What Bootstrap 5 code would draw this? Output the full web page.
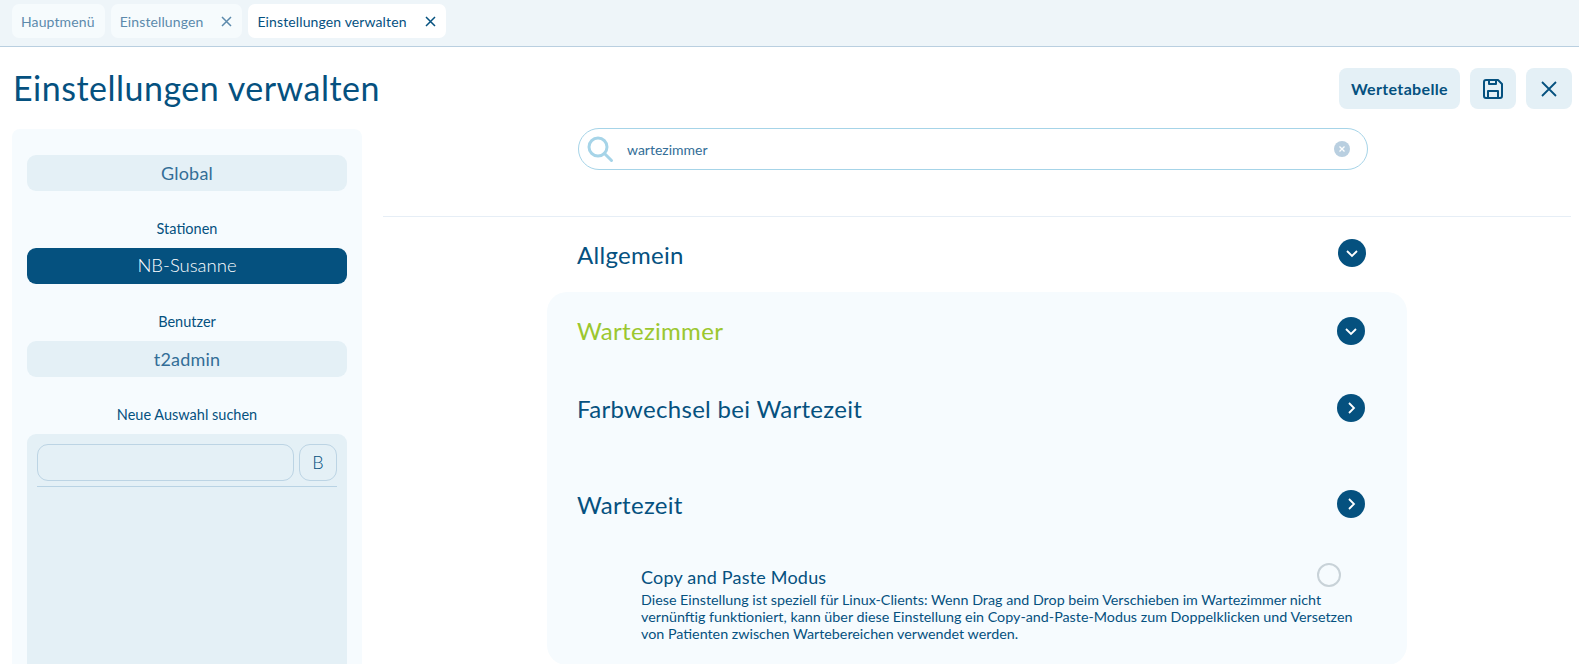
<!DOCTYPE html>
<html lang="de">
<head>
    <meta charset="UTF-8">
    <title>Einstellungen verwalten</title>
    <link href="https://cdn.jsdelivr.net/npm/bootstrap@5.3.0/dist/css/bootstrap.min.css" rel="stylesheet">
    <style>
        html, body { height: 664px; overflow: hidden; }
        body { font-family: Lato, "Open Sans", sans-serif; color: #05517f; background: #fff; }
        .tab-strip { height: 47px; background: #eef5f9; border-bottom: 1px solid #b9cfe0; padding: 4px 12px 0; gap: 6px; }
        .tab-item { height: 34px; border-radius: 7px; background: #f6fbfd; color: #5c8aac; font-size: 14px; letter-spacing: .12px; padding: 0 10px 0 9px; }
        .tab-item.is-active { background: #fff; color: #05517f; }
        .tab-x { width: 11px; height: 11px; margin-left: 18px; }
        .page-head { height: 82px; padding: 21px 7px 0 13px; }
        .page-title { font-size: 34px; font-weight: 400; letter-spacing: .5px; margin: 0; line-height: 40px; }
        .head-tools { gap: 10px; }
        .tool-btn { height: 41px; background: #e4f0f6; color: #05517f; border: 0; border-radius: 8px; font-weight: 700; font-size: 16px; letter-spacing: .35px; min-width: 46px; padding: 0 12px; }
        .side-panel { width: 350px; margin-left: 12px; height: 535px; background: #f6fbfe; border-radius: 8px 8px 0 0; padding: 26px 15px 0; flex: none; }
        .pick-btn { height: 36px; width: 100%; border: 0; border-radius: 9px; background: #e4f0f6; color: #336e97; font-size: 18px; letter-spacing: .2px; padding: 0; }
        .pick-btn.is-on { background: #05517f; color: #fff; font-weight: 300; font-size: 18.5px; letter-spacing: 0; }
        .pick-label { font-size: 14.5px; text-align: center; line-height: 18px; margin: 29px 0 10px; }
        .search-box { background: #e4f0f6; border-radius: 9px 9px 0 0; height: 240px; padding: 10px; }
        .search-row { gap: 5px; }
        .mini-input { height: 37px; flex: 1; border: 1px solid #bcd4e4; border-radius: 11px; background: transparent; }
        .mini-btn { width: 38px; height: 37px; border: 1px solid #bcd4e4; border-radius: 11px; background: transparent; color: #05517f; font-size: 18px; font-weight: 300; padding: 0; }
        .mini-rule { height: 1px; background: #b9d3e4; margin-top: 5px; }
        .main-col { margin-left: 21px; width: 1188px; flex: none; }
        .find-bar { width: 790px; height: 42px; margin: -1px 0 46px 195px; border: 1px solid #a6d4e8; border-radius: 21px; padding: 0 17px 0 8px; font-size: 14px; }
        .find-text { margin-left: 13px; color: #336e97; }
        .main-rule { height: 1px; background: #e6eef6; }
        .set-row { width: 789px; margin-left: 194px; height: 75px; font-size: 24px; letter-spacing: .3px; }
        .set-panel { width: 860px; margin: 0 0 0 164px; height: 373px; background: #f6fbfe; border-radius: 20px; padding: 2px 42px 0 30px; }
        .set-panel .set-row { width: auto; margin: 0; height: 76px; }
        .set-panel .set-first { height: 77px; }
        .set-panel .set-gap { margin: 20px 0 20px; }
        .set-green { color: #9bc72f; padding-bottom: 3px; }
        .round-chev { width: 28px; height: 28px; border-radius: 50%; background: #05517f; margin-bottom: 3px; }
        .opt-head { font-size: 18px; line-height: 20px; letter-spacing: .2px; }
        .opt-radio { width: 24px; height: 24px; border-radius: 50%; border: 2px solid #c8d2d8; background: transparent; margin: 0 24px 4px 0; flex: none; }
        .opt-text { font-size: 14.3px; line-height: 16.8px; margin: 1px 0 0; width: 720px; }
    </style>
</head>
<body>

<!-- Tabs -->
<div class="tab-strip d-flex">
    <div class="tab-item d-flex align-items-center">Hauptmenü</div>
    <div class="tab-item d-flex align-items-center">Einstellungen
        <svg class="tab-x" viewBox="0 0 11 11" fill="none" stroke="#5c8aac" stroke-width="1.5"><path d="M1 1l9 9M10 1l-9 9"/></svg>
    </div>
    <div class="tab-item is-active d-flex align-items-center">Einstellungen verwalten
        <svg class="tab-x" viewBox="0 0 11 11" fill="none" stroke="#05517f" stroke-width="1.5"><path d="M1 1l9 9M10 1l-9 9"/></svg>
    </div>
</div>

<!-- Header -->
<div class="page-head d-flex justify-content-between align-items-start">
    <h1 class="page-title">Einstellungen verwalten</h1>
    <div class="d-flex head-tools">
        <button class="tool-btn">Wertetabelle</button>
        <button class="tool-btn d-flex align-items-center justify-content-center">
            <svg width="22" height="22" viewBox="0 0 22 22" fill="none" stroke="#05517f" stroke-width="2" stroke-linejoin="round"><path d="M2 4a2 2 0 0 1 2-2h12l4 4v12a2 2 0 0 1-2 2H4a2 2 0 0 1-2-2z"/><path d="M6 20v-7h10v7M7 2v4h7V2"/></svg>
        </button>
        <button class="tool-btn d-flex align-items-center justify-content-center">
            <svg width="16" height="16" viewBox="0 0 16 16" fill="none" stroke="#05517f" stroke-width="1.8"><path d="M1 1l14 14M15 1L1 15"/></svg>
        </button>
    </div>
</div>

<div class="d-flex">
    <!-- Sidebar -->
    <div class="side-panel">
        <button class="pick-btn">Global</button>
        <div class="pick-label">Stationen</div>
        <button class="pick-btn is-on">NB-Susanne</button>
        <div class="pick-label">Benutzer</div>
        <button class="pick-btn">t2admin</button>
        <div class="pick-label">Neue Auswahl suchen</div>
        <div class="search-box">
            <div class="d-flex search-row">
                <div class="mini-input"></div>
                <button class="mini-btn">B</button>
            </div>
            <div class="mini-rule"></div>
        </div>
    </div>

    <!-- Main -->
    <div class="main-col">
        <div class="find-bar d-flex align-items-center">
            <svg width="27" height="27" viewBox="0 0 27 27" fill="none" stroke="#a6d4e8" stroke-width="3"><circle cx="11" cy="11" r="9"/><path d="M17.500 17.500l7 7" stroke-linecap="round"/></svg>
            <span class="find-text">wartezimmer</span>
            <svg class="ms-auto" width="16" height="16" viewBox="0 0 16 16"><circle cx="8" cy="8" r="8" fill="#b9cfe0"/><path d="M5.500 5.500l5 5M10.500 5.500l-5 5" stroke="#fff" stroke-width="1.3"/></svg>
        </div>
        <div class="main-rule"></div>

        <div class="set-row d-flex justify-content-between align-items-center">
            <span>Allgemein</span>
            <span class="round-chev d-flex align-items-center justify-content-center">
                <svg width="14" height="14" viewBox="0 0 14 14" fill="none" stroke="#fff" stroke-width="1.8"><path d="M2 5l5 5 5-5"/></svg>
            </span>
        </div>

        <div class="set-panel">
            <div class="set-row set-first d-flex justify-content-between align-items-center">
                <span class="set-green">Wartezimmer</span>
                <span class="round-chev d-flex align-items-center justify-content-center">
                    <svg width="14" height="14" viewBox="0 0 14 14" fill="none" stroke="#fff" stroke-width="1.8"><path d="M2 5l5 5 5-5"/></svg>
                </span>
            </div>
            <div class="set-row d-flex justify-content-between align-items-center">
                <span>Farbwechsel bei Wartezeit</span>
                <span class="round-chev d-flex align-items-center justify-content-center">
                    <svg width="14" height="14" viewBox="0 0 14 14" fill="none" stroke="#fff" stroke-width="1.8"><path d="M5 2l5 5-5 5"/></svg>
                </span>
            </div>
            <div class="set-row set-gap d-flex justify-content-between align-items-center">
                <span>Wartezeit</span>
                <span class="round-chev d-flex align-items-center justify-content-center">
                    <svg width="14" height="14" viewBox="0 0 14 14" fill="none" stroke="#fff" stroke-width="1.8"><path d="M5 2l5 5-5 5"/></svg>
                </span>
            </div>
            <div class="ms-5 ps-3">
                <div class="d-flex justify-content-between align-items-center">
                    <span class="opt-head">Copy and Paste Modus</span>
                    <input class="form-check-input opt-radio" type="radio">
                </div>
                <p class="opt-text">Diese Einstellung ist speziell für Linux-Clients: Wenn Drag and Drop beim Verschieben im Wartezimmer nicht vernünftig funktioniert, kann über diese Einstellung ein Copy-and-Paste-Modus zum Doppelklicken und Versetzen von Patienten zwischen Wartebereichen verwendet werden.</p>
            </div>
        </div>
    </div>
</div>

<script src="https://cdn.jsdelivr.net/npm/bootstrap@5.3.0/dist/js/bootstrap.bundle.min.js"></script>
</body>
</html>
